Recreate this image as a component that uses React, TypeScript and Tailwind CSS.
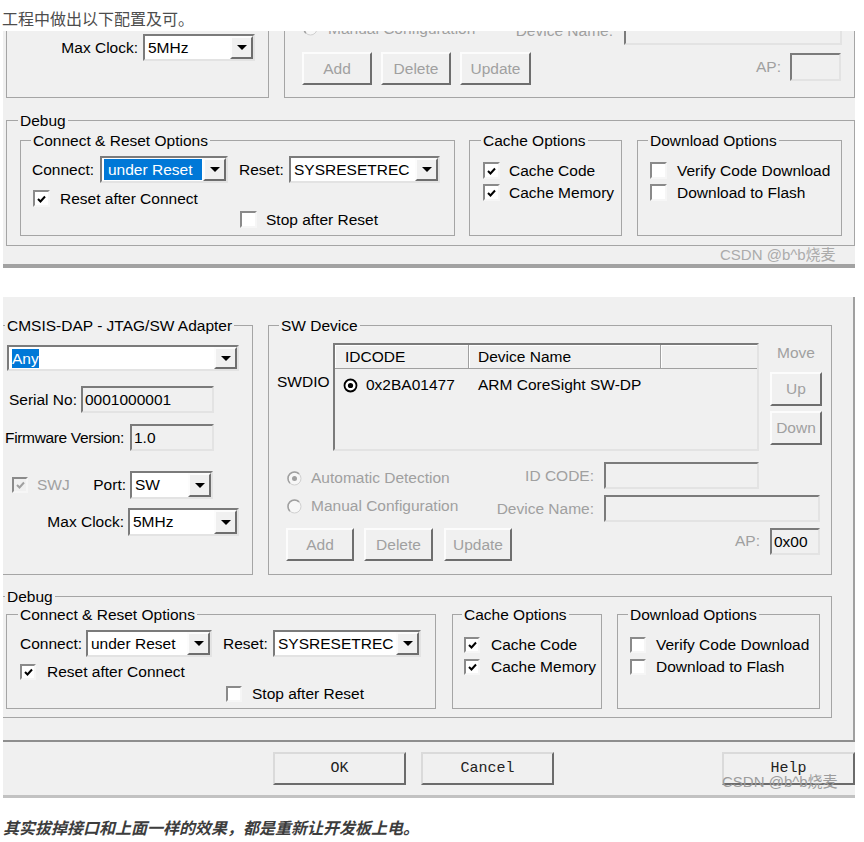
import React from "react";

const UI = "font-['Liberation_Sans','Noto_Sans_CJK_SC',Arial,sans-serif]";
const SUNKEN = "border-2 border-t-[#7b7b7b] border-l-[#7b7b7b] border-r-[#e3e3e3] border-b-[#e3e3e3]";
const RAISED = "border-2 border-t-[#fcfcfc] border-l-[#fcfcfc] border-r-[#6e6e6e] border-b-[#6e6e6e]";
const DIS = "text-[#a0a0a0]";

type Kids = { children?: React.ReactNode };

function Group({ label, pos, className = "", children }: { label: string; pos: string; className?: string } & Kids) {
  return (
    <div className={`relative shrink-0 border border-[#a5a5a5] ${className}`}>
      <div className={`absolute -top-[10px] ${pos} bg-[#f0f0f0] px-[2px] leading-[20px] whitespace-nowrap`}>{label}</div>
      {children}
    </div>
  );
}

function Arrow() {
  return (
    <svg width="10" height="5" viewBox="0 0 10 5">
      <path d="M0 0H10L5 5Z" fill="#000" />
    </svg>
  );
}

function Combo({ value, className, hl }: { value: string; className: string; hl?: "full" | "text" }) {
  return (
    <div className={`flex shrink-0 bg-white ${SUNKEN} ${className}`}>
      {hl === "full" ? (
        <div className="flex-1 my-[1px] ml-[2px] mr-[1px] flex items-center pl-[4px] bg-[#0078d7] text-white whitespace-nowrap overflow-hidden">
          {value}
        </div>
      ) : (
        <div className="flex-1 flex items-center pl-[3px] whitespace-nowrap overflow-hidden">
          <span className={hl === "text" ? "bg-[#0078d7] text-white leading-[19px]" : ""}>{value}</span>
        </div>
      )}
      <div className={`w-[23px] shrink-0 flex items-center justify-center bg-[#f0f0f0] ${RAISED}`}>
        <Arrow />
      </div>
    </div>
  );
}

function Field({ value = "", className }: { value?: string; className: string }) {
  return (
    <div className={`shrink-0 flex items-center pl-[2px] bg-[#f0f0f0] whitespace-nowrap overflow-hidden ${SUNKEN} ${className}`}>
      {value}
    </div>
  );
}

function Check({ on, dis, className = "w-[16px] h-[16px]" }: { on?: boolean; dis?: boolean; className?: string }) {
  return (
    <div
      className={`shrink-0 flex items-center justify-center border-2 border-t-[#8a8a8a] border-l-[#8a8a8a] border-r-[#f6f6f6] border-b-[#f6f6f6] ${
        dis ? "bg-[#f0f0f0]" : "bg-white"
      } ${className}`}
    >
      {on && (
        <svg width="9" height="8" viewBox="0 0 9 8">
          <path d="M1 4L3.5 6.5L8 1.5" fill="none" stroke={dis ? "#a0a0a0" : "#000"} strokeWidth="2" />
        </svg>
      )}
    </div>
  );
}

function Radio({ on }: { on?: boolean }) {
  return (
    <svg width="15" height="15" viewBox="0 0 15 15" className="shrink-0">
      <circle cx="7.5" cy="7.5" r="6.5" fill="#f7f7f7" stroke="#d0d0d0" />
      <path d="M2.9 12.1A6.5 6.5 0 0 1 12.1 2.9" fill="none" stroke="#a0a0a0" strokeWidth="1.5" />
      {on && <circle cx="7.5" cy="7.5" r="2.5" fill="#a0a0a0" />}
    </svg>
  );
}

function RadioOn() {
  return (
    <svg width="15" height="15" viewBox="0 0 15 15" className="shrink-0">
      <circle cx="7.5" cy="7.5" r="6" fill="#fff" stroke="#000" strokeWidth="1.8" />
      <circle cx="7.5" cy="7.5" r="2.6" fill="#000" />
    </svg>
  );
}

function Btn({ label, className, dis = true }: { label: string; className: string; dis?: boolean }) {
  return (
    <div className={`shrink-0 flex items-center justify-center bg-[#f0f0f0] ${RAISED} ${dis ? DIS : ""} ${className}`}>
      {label}
    </div>
  );
}

function DlgBtn({ label, className = "" }: { label: string; className?: string }) {
  return (
    <div
      className={`shrink-0 w-[133px] h-[33px] flex items-center justify-center bg-[#f0f0f0] border-2 border-t-[#dadada] border-l-[#dadada] border-r-[#6b6b6b] border-b-[#6b6b6b] font-['Liberation_Mono',monospace] text-[15px] text-[#222] ${className}`}
    >
      {label}
    </div>
  );
}

function Mark({ className }: { className: string }) {
  return (
    <div className={`absolute text-[15px] leading-[20px] whitespace-nowrap ${className}`}>CSDN @b^b烧麦</div>
  );
}

function CheckRow({ on, label, className, box, gap }: { on?: boolean; label: string; className: string; box: string; gap: string }) {
  return (
    <div className={`flex items-center ${className}`}>
      <Check on={on} className={box} />
      <span className={`${gap} whitespace-nowrap`}>{label}</span>
    </div>
  );
}

function Dialog1() {
  const box = "w-[17px] h-[17px]";
  return (
    <div
      className={`relative ml-[3px] w-[852px] h-[237px] bg-[#f0f0f0] overflow-hidden flex flex-col items-start border-b-4 border-b-[#a2a2a2] ${UI} text-[15.5px] leading-[20px] text-black`}
    >
      <div className="flex items-start">
        <div className="ml-[3px] w-[263px] h-[67px] shrink-0 flex flex-col border border-t-0 border-[#a5a5a5]">
          <div className="flex items-center mt-[3px]">
            <div className="w-[136px] flex justify-end pr-[5px] whitespace-nowrap">Max Clock:</div>
            <Combo value="5MHz" className="w-[112px] h-[27px]" />
          </div>
        </div>
        <div className="ml-[15px] w-[571px] h-[67px] shrink-0 flex flex-col border border-t-0 border-[#a5a5a5]">
          <div className="flex items-center -mt-[14px] h-[28px] pl-[18px]">
            <div className="w-[321px] flex items-center">
              <div className={`flex items-center mb-[5px] ${DIS}`}>
                <Radio />
                <span className="ml-[10px] whitespace-nowrap">Manual Configuration</span>
              </div>
              <div className={`ml-auto pr-[11px] whitespace-nowrap ${DIS}`}>Device Name:</div>
            </div>
            <Field className="w-[218px] h-[28px]" />
          </div>
          <div className="flex items-start mt-[7px] pl-[17px]">
            <Btn label="Add" className="w-[70px] h-[33px]" />
            <Btn label="Delete" className="ml-[9px] w-[70px] h-[33px]" />
            <Btn label="Update" className="ml-[9px] w-[71px] h-[33px]" />
            <div className="ml-auto mr-[13px] flex items-start">
              <div className={`mt-[5px] ${DIS}`}>AP:</div>
              <Field className="ml-[9px] mt-[1px] w-[51px] h-[28px]" />
            </div>
          </div>
        </div>
      </div>

      <Group label="Debug" pos="left-[11px]" className="ml-[3px] mt-[22px] w-[849px] h-[126px]">
        <div className="flex items-start mt-[19px] pl-[13px]">
          <Group label="Connect & Reset Options" pos="left-[10px]" className="w-[435px] h-[96px] flex flex-col items-start">
            <div className="flex items-center mt-[15px] pl-[11px]">
              <div className="w-[68px] whitespace-nowrap">Connect:</div>
              <Combo value="under Reset" hl="full" className="w-[128px] h-[27px]" />
              <div className="w-[61px] pl-[11px]">Reset:</div>
              <Combo value="SYSRESETREC" className="w-[151px] h-[27px]" />
            </div>
            <CheckRow on label="Reset after Connect" box={box} gap="ml-[10px]" className="h-[17px] mt-[7px] pl-[12px]" />
            <CheckRow label="Stop after Reset" box={box} gap="ml-[9px]" className="h-[17px] mt-[4px] pl-[219px]" />
          </Group>
          <Group label="Cache Options" pos="left-[11px]" className="ml-[14px] w-[153px] h-[96px] flex flex-col items-start">
            <CheckRow on label="Cache Code" box={box} gap="ml-[9px]" className="h-[17px] mt-[21px] pl-[13px]" />
            <CheckRow on label="Cache Memory" box={box} gap="ml-[9px]" className="h-[17px] mt-[5px] pl-[13px]" />
          </Group>
          <Group label="Download Options" pos="left-[10px]" className="ml-[15px] w-[205px] h-[96px] flex flex-col items-start">
            <CheckRow label="Verify Code Download" box={box} gap="ml-[10px]" className="h-[17px] mt-[21px] pl-[12px]" />
            <CheckRow label="Download to Flash" box={box} gap="ml-[10px]" className="h-[17px] mt-[5px] pl-[12px]" />
          </Group>
        </div>
      </Group>
      <Mark className="left-[717px] top-[214px] text-[#ababab]" />
    </div>
  );
}

function Dialog2() {
  const box = "w-[16px] h-[16px]";
  return (
    <div
      className={`relative ml-[3px] mt-[29px] w-[852px] h-[501px] bg-[#f0f0f0] overflow-hidden flex flex-col items-start border-b-[3px] border-b-[#c2c2c2] ${UI} text-[15.5px] leading-[20px] text-black`}
    >
      <div className="w-[852px] h-[443px] shrink-0 flex flex-col items-start border-r-2 border-r-[#a0a0a0]">
        <div className="flex items-start mt-[28px]">
          <Group label="CMSIS-DAP - JTAG/SW Adapter" pos="left-[2px]" className="-ml-[1px] w-[251px] h-[250px] flex flex-col items-start">
            <Combo value="Any" hl="text" className="ml-[4px] mt-[19px] w-[232px] h-[26px]" />
            <div className="flex items-center mt-[15px]">
              <div className="w-[78px] flex justify-end pr-[4px] whitespace-nowrap">Serial No:</div>
              <Field value="0001000001" className="w-[133px] h-[27px]" />
            </div>
            <div className="flex items-center mt-[11px]">
              <div className="w-[127px] flex justify-end pr-[6px] whitespace-nowrap tracking-[-0.35px]">Firmware Version:</div>
              <Field value="1.0" className="w-[84px] h-[27px]" />
            </div>
            <div className="flex items-center mt-[20px] pl-[9px]">
              <Check on dis />
              <div className={`ml-[9px] w-[56px] ${DIS}`}>SWJ</div>
              <div className="w-[37px] flex justify-end pr-[4px]">Port:</div>
              <Combo value="SW" className="w-[83px] h-[28px]" />
            </div>
            <div className="flex items-center mt-[9px]">
              <div className="w-[125px] flex justify-end pr-[4px] whitespace-nowrap">Max Clock:</div>
              <Combo value="5MHz" className="w-[111px] h-[28px]" />
            </div>
          </Group>

          <Group label="SW Device" pos="left-[10px]" className="ml-[15px] w-[564px] h-[250px] flex flex-col items-start">
            <div className="flex items-start mt-[17px] pl-[8px]">
              <div className="w-[56px] mt-[29px]">SWDIO</div>
              <div className={`w-[426px] h-[108px] shrink-0 flex flex-col bg-[#f0f0f0] ${SUNKEN}`}>
                <div className="flex h-[24px] shrink-0">
                  <div className="w-[134px] flex items-center pl-[10px] border-r border-b border-[#a0a0a0] shadow-[inset_1px_1px_0_#fff]">IDCODE</div>
                  <div className="w-[192px] flex items-center pl-[9px] border-r border-b border-[#a0a0a0] shadow-[inset_1px_1px_0_#fff]">Device Name</div>
                  <div className="flex-1 border-b border-[#a0a0a0] shadow-[inset_1px_1px_0_#fff]" />
                </div>
                <div className="flex items-center mt-[6px]">
                  <div className="w-[134px] flex items-center pl-[8px]">
                    <RadioOn />
                    <span className="ml-[8px]">0x2BA01477</span>
                  </div>
                  <div className="pl-[9px] whitespace-nowrap">ARM CoreSight SW-DP</div>
                </div>
              </div>
              <div className="ml-[11px] w-[52px] flex flex-col items-center">
                <div className={DIS}>Move</div>
                <Btn label="Up" className="mt-[9px] w-[52px] h-[34px]" />
                <Btn label="Down" className="mt-[5px] w-[52px] h-[34px]" />
              </div>
            </div>

            <div className="flex items-center mt-[11px] pl-[18px]">
              <div className="w-[317px] flex items-center">
                <div className={`flex items-center mt-[5px] ${DIS}`}>
                  <Radio on />
                  <span className="ml-[9px] whitespace-nowrap">Automatic Detection</span>
                </div>
                <div className={`ml-auto pr-[10px] whitespace-nowrap ${DIS}`}>ID CODE:</div>
              </div>
              <Field className="w-[155px] h-[27px]" />
            </div>
            <div className="flex items-center mt-[6px] pl-[18px]">
              <div className="w-[317px] flex items-center">
                <div className={`flex items-center mb-[5px] ${DIS}`}>
                  <Radio />
                  <span className="ml-[9px] whitespace-nowrap">Manual Configuration</span>
                </div>
                <div className={`ml-auto pr-[10px] whitespace-nowrap ${DIS}`}>Device Name:</div>
              </div>
              <Field className="w-[216px] h-[27px]" />
            </div>
            <div className="flex items-start mt-[6px] pl-[17px] w-full">
              <Btn label="Add" className="w-[68px] h-[33px]" />
              <Btn label="Delete" className="ml-[10px] w-[69px] h-[33px]" />
              <Btn label="Update" className="ml-[11px] w-[68px] h-[33px]" />
              <div className="ml-auto mr-[11px] flex items-start">
                <div className={`mt-[3px] ${DIS}`}>AP:</div>
                <Field value="0x00" className="ml-[10px] w-[50px] h-[27px]" />
              </div>
            </div>
          </Group>
        </div>

        <Group label="Debug" pos="left-[2px]" className="-ml-[1px] mt-[21px] w-[830px] h-[122px]">
          <div className="flex items-start mt-[17px] pl-[3px]">
            <Group label="Connect & Reset Options" pos="left-[11px]" className="w-[430px] h-[95px] flex flex-col items-start">
              <div className="flex items-center mt-[15px] pl-[13px]">
                <div className="w-[66px] whitespace-nowrap">Connect:</div>
                <Combo value="under Reset" className="w-[126px] h-[27px]" />
                <div className="w-[61px] pl-[11px]">Reset:</div>
                <Combo value="SYSRESETREC" className="w-[148px] h-[27px]" />
              </div>
              <CheckRow on label="Reset after Connect" box={box} gap="ml-[11px]" className="h-[16px] mt-[7px] pl-[13px]" />
              <CheckRow label="Stop after Reset" box={box} gap="ml-[10px]" className="h-[16px] mt-[6px] pl-[219px]" />
            </Group>
            <Group label="Cache Options" pos="left-[9px]" className="ml-[16px] w-[150px] h-[95px] flex flex-col items-start">
              <CheckRow on label="Cache Code" box={box} gap="ml-[11px]" className="h-[16px] mt-[22px] pl-[11px]" />
              <CheckRow on label="Cache Memory" box={box} gap="ml-[11px]" className="h-[16px] mt-[6px] pl-[11px]" />
            </Group>
            <Group label="Download Options" pos="left-[10px]" className="ml-[15px] w-[203px] h-[95px] flex flex-col items-start">
              <CheckRow label="Verify Code Download" box={box} gap="ml-[10px]" className="h-[16px] mt-[22px] pl-[12px]" />
              <CheckRow label="Download to Flash" box={box} gap="ml-[10px]" className="h-[16px] mt-[6px] pl-[12px]" />
            </Group>
          </div>
        </Group>
      </div>

      <div className="w-[852px] h-0 shrink-0 border-t-2 border-t-[#8e8e8e]" />
      <div className="flex items-start w-[852px] mt-[10px]">
        <DlgBtn label="OK" className="ml-[270px] border-t-[#a8a8a8] border-l-[#a8a8a8]" />
        <DlgBtn label="Cancel" className="ml-[15px]" />
        <DlgBtn label="Help" className="ml-auto w-[132px]" />
      </div>
      <Mark className="left-[719px] top-[475px] text-[#9c9c9c]" />
    </div>
  );
}

export default function App() {
  return (
    <div className="w-[864px] min-h-[842px] bg-white">
      <p className="h-[31px] pt-[6px] pl-[2px] leading-[24px] text-[16px] text-[#4d4d4d] font-['Noto_Sans_CJK_SC','Liberation_Sans',sans-serif]">
        工程中做出以下配置及可。
      </p>
      <Dialog1 />
      <Dialog2 />
      <p className="mt-[17px] pl-[3px] leading-[24px] text-[16px] font-bold italic text-[#3d3d3d] font-['Noto_Sans_CJK_SC','Liberation_Sans',sans-serif]">
        其实拔掉接口和上面一样的效果，都是重新让开发板上电。
      </p>
    </div>
  );
}
